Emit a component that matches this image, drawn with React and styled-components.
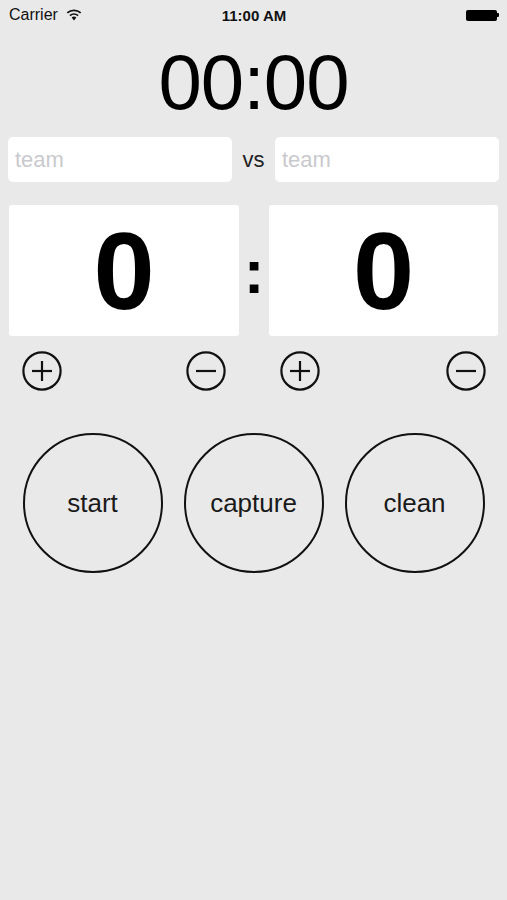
import React, { useState } from 'react';
import styled, { createGlobalStyle } from 'styled-components';

const GlobalStyle = createGlobalStyle`
  html, body {
    margin: 0;
    padding: 0;
    background: #e9e9e9;
  }
  body {
    font-family: "Liberation Sans", Arial, Helvetica, sans-serif;
    color: #000;
  }
`;

const Screen = styled.div`
  width: 507px;
  min-height: 900px;
  background: #e9e9e9;
  display: flex;
  flex-direction: column;
`;

const StatusBar = styled.div`
  height: 30px;
  display: grid;
  grid-template-columns: 1fr auto 1fr;
  align-items: center;
  padding: 0 8px 0 9px;
  font-size: 16px;
  color: #111;
`;

const Carrier = styled.div`
  display: flex;
  align-items: center;
  gap: 8px;
`;

const Clock = styled.div`
  font-weight: bold;
  font-size: 15px;
`;

const Battery = styled.div`
  justify-self: end;
  display: flex;
  align-items: center;
`;

const BatteryBody = styled.div`
  width: 31px;
  height: 11px;
  border-radius: 2px;
  background: #000;
`;

const BatteryNub = styled.div`
  width: 2px;
  height: 4px;
  background: #000;
  border-radius: 0 1px 1px 0;
`;

const Timer = styled.div`
  margin-top: 13px;
  text-align: center;
  font-size: 78px;
  line-height: 78px;
  letter-spacing: -1px;
`;

const TeamRow = styled.div`
  margin-top: 16px;
  padding: 0 8px;
  display: grid;
  grid-template-columns: 224px 1fr 224px;
  align-items: center;
`;

const TeamInput = styled.input`
  height: 45px;
  box-sizing: border-box;
  border: none;
  border-radius: 5px;
  background: #fff;
  padding: 0 7px;
  font-family: inherit;
  font-size: 22px;
  outline: none;
  &::placeholder {
    color: #c9c9ce;
  }
`;

const Versus = styled.div`
  text-align: center;
  font-size: 22px;
  color: #222;
`;

const ScoreRow = styled.div`
  padding: 0 9px 0 9px;
  display: grid;
  grid-template-columns: 230px 30px 229px;
  margin-top: ${p => p.$top}px;
`;

const ScoreBox = styled.div`
  height: 131px;
  background: #fff;
  border-radius: 3px;
  display: flex;
  align-items: center;
  justify-content: center;
  font-weight: bold;
  font-size: 110px;
  line-height: 1;
`;

const Colon = styled.div`
  display: flex;
  align-items: center;
  justify-content: center;
  font-weight: bold;
  font-size: 62px;
  padding-top: 2px;
`;

const StepGroup = styled.div`
  display: flex;
  justify-content: space-between;
  padding: 0 ${p => p.$right}px 0 ${p => p.$left}px;
`;

const StepButton = styled.button`
  width: 40px;
  height: 40px;
  padding: 0;
  border: none;
  background: none;
  cursor: pointer;
  display: block;
`;

const Actions = styled.div`
  margin-top: 42px;
  display: flex;
  justify-content: center;
  gap: 21px;
`;

const RoundButton = styled.button`
  width: 140px;
  height: 140px;
  border-radius: 50%;
  border: 2px solid #111;
  background: transparent;
  font-family: inherit;
  font-size: 26px;
  color: #1a1a1a;
  padding: 0;
  cursor: pointer;
`;

const Wifi = () => (
  <svg width="16" height="12" viewBox="0 0 16 12">
    <path d="M8 11.5 L5.6 8.6 A3.8 3.8 0 0 1 10.4 8.6 Z" fill="#111" />
    <path d="M3.9 6.6 A6.4 6.4 0 0 1 12.1 6.6" stroke="#111" strokeWidth="1.8" fill="none" />
    <path d="M1.3 3.9 A10 10 0 0 1 14.7 3.9" stroke="#111" strokeWidth="1.8" fill="none" />
  </svg>
);

const StepIcon = ({ plus }) => (
  <svg width="40" height="40" viewBox="0 0 40 40">
    <circle cx="20" cy="20" r="18.6" stroke="#111" strokeWidth="2.2" fill="none" />
    <line x1="10" y1="20" x2="30" y2="20" stroke="#111" strokeWidth="2.2" />
    {plus && <line x1="20" y1="10" x2="20" y2="30" stroke="#111" strokeWidth="2.2" />}
  </svg>
);

const App = () => {
  const [home, setHome] = useState(0);
  const [away, setAway] = useState(0);

  return (
    <Screen>
      <GlobalStyle />
      <StatusBar>
        <Carrier>
          Carrier <Wifi />
        </Carrier>
        <Clock>11:00 AM</Clock>
        <Battery>
          <BatteryBody />
          <BatteryNub />
        </Battery>
      </StatusBar>

      <Timer>00:00</Timer>

      <TeamRow>
        <TeamInput placeholder="team" />
        <Versus>vs</Versus>
        <TeamInput placeholder="team" />
      </TeamRow>

      <ScoreRow $top={23}>
        <ScoreBox>{home}</ScoreBox>
        <Colon>:</Colon>
        <ScoreBox>{away}</ScoreBox>
      </ScoreRow>

      <ScoreRow $top={15}>
        <StepGroup $left={13} $right={13}>
          <StepButton onClick={() => setHome(home + 1)}><StepIcon plus /></StepButton>
          <StepButton onClick={() => setHome(Math.max(0, home - 1))}><StepIcon /></StepButton>
        </StepGroup>
        <div />
        <StepGroup $left={11} $right={12}>
          <StepButton onClick={() => setAway(away + 1)}><StepIcon plus /></StepButton>
          <StepButton onClick={() => setAway(Math.max(0, away - 1))}><StepIcon /></StepButton>
        </StepGroup>
      </ScoreRow>

      <Actions>
        <RoundButton>start</RoundButton>
        <RoundButton>capture</RoundButton>
        <RoundButton>clean</RoundButton>
      </Actions>
    </Screen>
  );
};

export default App;
